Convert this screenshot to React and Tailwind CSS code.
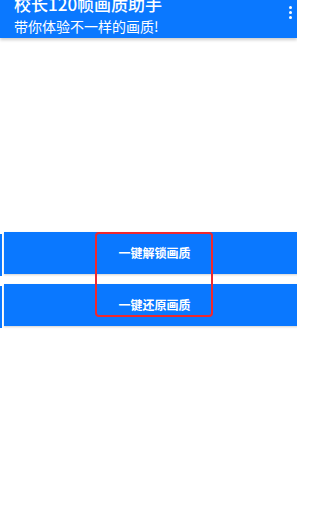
const font = { fontFamily: '"Noto Sans CJK SC", "Noto Sans", sans-serif' };

function ActionBar({ label }) {
  return (
    <div className="flex h-[42px] w-full">
      <div className="mt-[2px] h-[42px] w-[2px] shrink-0 bg-[#0a78ff]" />
      <div className="w-[2px] shrink-0" />
      <button className="flex h-[42px] w-[301px] shrink-0 items-center justify-center bg-[#0a78ff] text-[12px] font-bold text-white shadow-[0_1px_2px_rgba(0,0,0,0.18)]">
        {label}
      </button>
    </div>
  );
}

export default function App() {
  return (
    <div className="relative h-[518px] w-[297px] overflow-hidden bg-white" style={font}>
      {/* app bar */}
      <header className="relative flex h-[38px] items-start justify-between bg-[#0a78ff] pl-[14px] pr-[5px] shadow-[0_2px_3px_rgba(0,0,0,0.2)]">
        <div className="flex flex-col text-white">
          <h1 className="mt-[-6px] text-[17px] font-medium leading-[20px]">校长120帧画质助手</h1>
          <p className="mt-[4px] text-[14px] leading-[16px]">带你体验不一样的画质!</p>
        </div>
        <div className="mt-[6px] flex flex-col items-center gap-[2px]">
          <span className="h-[3px] w-[3px] rounded-full bg-white" />
          <span className="h-[3px] w-[3px] rounded-full bg-white" />
          <span className="h-[3px] w-[3px] rounded-full bg-white" />
        </div>
      </header>

      <main className="flex flex-col gap-[10px] pt-[194px]">
        <ActionBar label="一键解锁画质" />
        <ActionBar label="一键还原画质" />
      </main>

      {/* red highlight annotation */}
      <div className="absolute left-[95px] top-[232px] h-[85px] w-[118px] rounded-[4px] border-2 border-[#f0282d]" />
    </div>
  );
}
